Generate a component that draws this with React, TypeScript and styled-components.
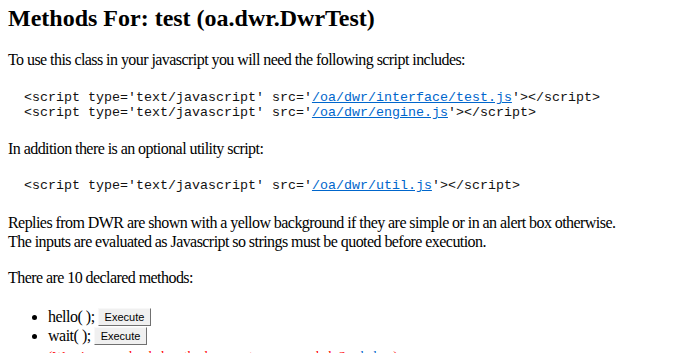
import React from "react";
import styled, { createGlobalStyle } from "styled-components";

const Global = createGlobalStyle`
  html, body {
    margin: 0;
    padding: 0;
    background: #ffffff;
  }
  body {
    font-family: "Liberation Serif", "Times New Roman", serif;
    font-size: 16px;
    color: #000000;
  }
`;

const Page = styled.div`
  padding: 4px 8px 0 8px;
`;

const Heading = styled.h2`
  margin: 0;
  font-size: 24px;
  line-height: 28px;
  font-weight: bold;
`;

const Para = styled.p<{ $top: number }>`
  margin: ${(p) => p.$top}px 0 0 0;
  line-height: 19px;
  letter-spacing: -0.56px;
`;

const Code = styled.pre<{ $top: number }>`
  margin: ${(p) => p.$top}px 0 0 0;
  font-family: "Liberation Mono", "Courier New", monospace;
  font-size: 13.33px;
  line-height: 15px;
  color: #111111;
`;

const Link = styled.a`
  color: #0066cc;
  text-decoration: underline;
`;

const MethodList = styled.ul`
  margin: 20px 0 0 0;
  padding: 0 0 0 40px;
  line-height: 19px;
  list-style: disc;
`;

const Method = styled.li`
  line-height: 19px;
`;

const Signature = styled.span`
  letter-spacing: -0.5px;
`;

const ExecButton = styled.button`
  height: 18px;
  margin: 0 0 0 3px;
  padding: 0 6px;
  font-family: "Liberation Sans", Arial, sans-serif;
  font-size: 11px;
  line-height: 16px;
  color: #000000;
  background: #f0f0f0;
  border: 1px solid;
  border-color: #f8f8f8 #707070 #707070 #f8f8f8;
  border-radius: 0;
  vertical-align: 1.5px;
  cursor: pointer;
`;

const Warning = styled.span`
  color: #ff0000;
  font-size: 13.33px;
`;

const scripts = ["/oa/dwr/interface/test.js", "/oa/dwr/engine.js"];

export default function App() {
  return (
    <>
      <Global />
      <Page>
        <Heading>Methods For: test (oa.dwr.DwrTest)</Heading>
        <Para $top={18}>
          To use this class in your javascript you will need the following script includes:
        </Para>
        <Code $top={21}>
          {scripts.map((s, i) => (
            <React.Fragment key={s}>
              {"  <script type='text/javascript' src='"}
              <Link href={s}>{s}</Link>
              {"'></script>"}
              {i < scripts.length - 1 ? "\n" : ""}
            </React.Fragment>
          ))}
        </Code>
        <Para $top={19}>In addition there is an optional utility script:</Para>
        <Code $top={20}>
          {"  <script type='text/javascript' src='"}
          <Link href="/oa/dwr/util.js">/oa/dwr/util.js</Link>
          {"'></script>"}
        </Code>
        <Para $top={20}>
          Replies from DWR are shown with a yellow background if they are simple or in an alert box otherwise.
          <br />
          The inputs are evaluated as Javascript so strings must be quoted before execution.
        </Para>
        <Para $top={17}>There are 10 declared methods:</Para>
        <MethodList>
          <Method>
            <Signature>hello( );</Signature>
            <ExecButton type="button">Execute</ExecButton>
          </Method>
          <Method>
            <Signature>wait( );</Signature>
            <ExecButton type="button">Execute</ExecButton>
            <br />
            <Warning>
              (Warning: overloaded methods are not recommended. See <Link href="#overloadedMethod">below</Link>)
            </Warning>
          </Method>
        </MethodList>
      </Page>
    </>
  );
}
